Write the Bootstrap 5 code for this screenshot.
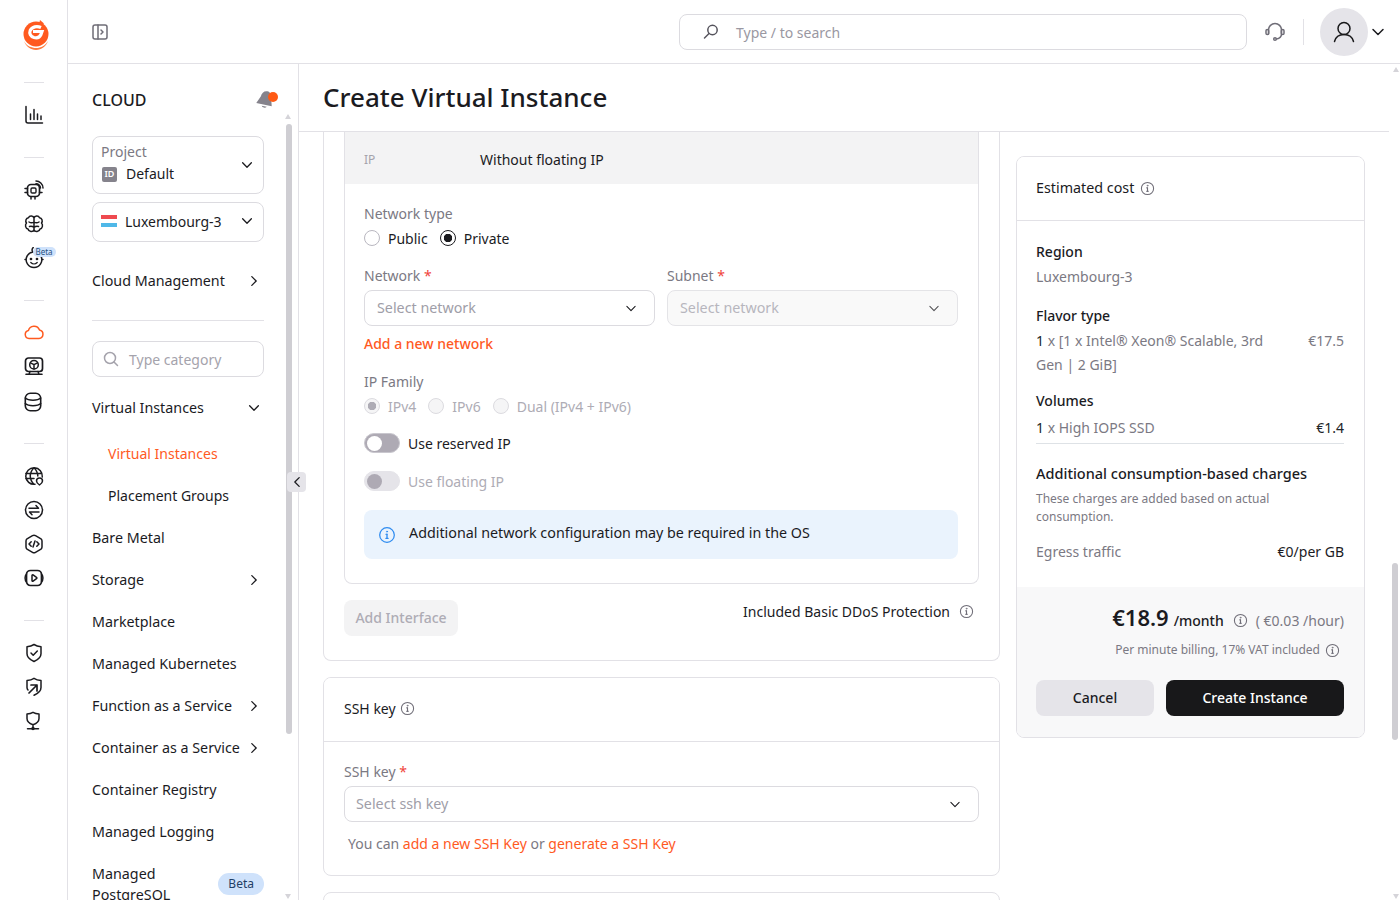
<!DOCTYPE html>
<html lang="en">
<head>
  <meta charset="UTF-8">
  <title>Create Virtual Instance</title>
  <link rel="stylesheet" href="https://cdn.jsdelivr.net/npm/bootstrap@5.3.0/dist/css/bootstrap.min.css">
  <style>
    html, body { height: 100%; }
    body { font-family: "Noto Sans", sans-serif; font-size: 14px; color: #1b1b1f; overflow: hidden; }
    svg { display: block; fill: none; stroke: currentColor; stroke-width: 1.5; stroke-linecap: round; stroke-linejoin: round; flex: none; }

    .rail { width: 68px; flex: none; border-right: 1px solid #e2e1e6; padding-top: 20px; }
    .rail-logo { height: 30px; margin: 0 0 32px 4px; }
    .rail-sep { width: 20px; height: 1px; background: #e2e1e6; }
    .rail-group { padding: 15px 0 25px; }
    .rail-slot { height: 34px; position: relative; color: #1b1b1f; }
    .rail-beta { position: absolute; left: 9px; top: 6px; font-size: 8px; line-height: 10px; padding: 0 3px; border-radius: 5px; background: #cfe2fb; color: #24507f; }

    .topbar { height: 64px; flex: none; border-bottom: 1px solid #e2e1e6; padding: 0 14px 0 24px; }
    .searchbox { width: 568px; height: 36px; border: 1px solid #dcdbe0; border-radius: 8px; margin-left: auto; padding: 1px 0 0 22px; color: #9a98a2; }
    .avatar { width: 48px; height: 48px; background: #e5e4e9; }
    .vline { width: 1px; height: 26px; background: #e2e1e6; margin: 0 16px 0 17px; }

    .side { width: 231px; flex: none; border-right: 1px solid #e2e1e6; padding: 0 34px 0 24px; position: relative; }
    .side-title { height: 72px; font-size: 16px; font-weight: 500; }
    .side-box { border: 1px solid #dcdbe0; border-radius: 8px; padding: 0 9px 0 8px; }
    .box-project { height: 58px; margin-bottom: 8px; padding-bottom: 4px; }
    .box-region { height: 40px; padding-bottom: 2px; }
    .box-search { height: 36px; color: #a5a3ac; padding-left: 10px; gap: 10px; }
    .id-tag { width: 15px; height: 15px; font-size: 9px; font-weight: 600; background: #85838c; color: #fff; border-radius: 2px; margin-left: 1px; }
    .flag { width: 16px; height: 12px; background: linear-gradient(#ef4a4f 33%, #fff 33% 66%, #4fb8e8 66%); }
    .side-hr { height: 1px; background: #e2e1e6; margin: 19px 0 20px; }
    .side-item { height: 42px; padding: 2px 3px 0 0; font-size: 14.3px; white-space: nowrap; }
    .side-sub { padding-left: 16px; font-size: 14px; }
    .side-active { color: #ff5a1f; }
    .beta-pill { background: #cfe2fb; color: #1f3f66; font-size: 12px; padding: 2px 10px; border-radius: 11px; line-height: 18px; }
    .collapse-tab { position: absolute; width: 19px; height: 20px; background: #e5e4e9; border-radius: 4px; }
    .thumb { position: absolute; width: 6px; background: #cfced3; border-radius: 3px; }
    .arrow-up, .arrow-down { position: absolute; width: 0; height: 0; border-left: 3.5px solid transparent; border-right: 3.5px solid transparent; }
    .arrow-up { border-bottom: 5px solid #d5d4d9; }
    .arrow-down { border-top: 5px solid #d5d4d9; }

    .page-main { position: relative; min-width: 0; }
    .page-title { height: 68px; margin-right: 11px; padding-left: 24px; border-bottom: 1px solid #e2e1e6; flex: none; }
    .page-title h1 { font-size: 26px; font-weight: 500; margin: 0; color: #1b1b1f; }
    .form-col { width: 677px; margin-left: 24px; flex: none; }
    .cost-col { width: 349px; margin: 24px 0 0 16px; flex: none; }

    .card { --bs-card-border-color: #e2e1e6; --bs-card-border-radius: 8px; --bs-card-inner-border-radius: 7px; --bs-card-cap-bg: #fff; }
    .card-top { border-top: 0; border-top-left-radius: 0; border-top-right-radius: 0; height: 529px; margin-bottom: 16px; padding: 0 20px; }
    .card-inner { border-top: 0; border-top-left-radius: 0; border-top-right-radius: 0; height: 452px; padding: 0 20px 0 19px; }
    .ip-row { height: 52px; margin: 0 -20px 0 -19px; padding: 3px 0 0 19px; background: #f3f3f4; }
    .ip-key { width: 116px; font-size: 12px; color: #a5a3ac; padding-top: 1px; }
    .lbl { color: #7b7983; line-height: 20px; }
    .req { color: #f0443c; }
    .form-select { height: 36px; font-size: 14.3px; color: #a09ea8; border-color: #dcdbe0; border-radius: 8px; padding: 0 36px 0 12px; background-size: 14px 11px; background-position: right 16px center;
      --bs-form-select-bg-img: url("data:image/svg+xml,%3csvg xmlns='http://www.w3.org/2000/svg' viewBox='0 0 16 16'%3e%3cpath fill='none' stroke='%231b1b1f' stroke-linecap='round' stroke-linejoin='round' stroke-width='1.6' d='m2 5 6 6 6-6'/%3e%3c/svg%3e"); }
    .form-select:disabled { background-color: #f7f7f8; opacity: .75; }
    .sel-ssh { padding-left: 11px; }
    .opts { height: 24px; margin-top: 2px; gap: 12px; }
    .form-check { margin: 0; padding: 0; min-height: 0; display: flex; align-items: center; gap: 8px; }
    .form-check .form-check-input { float: none; margin: 0; width: 16px; height: 16px; border-color: #b9b7c0; }
    .form-check .form-check-input:checked[type=radio] { background-color: #fff; border-color: #1b1b1f; background-image: radial-gradient(circle, #1b1b1f 0 4px, transparent 4.5px); }
    .form-check .form-check-input:disabled { opacity: 1; background-color: #f5f5f6; border-color: #dcdbe0; }
    .form-check .form-check-input:checked:disabled[type=radio] { background-color: #f5f5f6; border-color: #dcdbe0; background-image: radial-gradient(circle, #aeacb5 0 4px, transparent 4.5px); }
    .form-check-label { opacity: 1 !important; }
    .muted-opt { color: #aeacb5; }
    .add-link { color: #ff5a1f; text-decoration: none; }
    .add-link-b { font-weight: 500; }
    .toggle { width: 36px; height: 20px; border-radius: 10px; background: #aeaab4; padding: 2px; border: 1px solid #c9c7ce; }
    .toggle i { display: block; width: 15px; height: 15px; border-radius: 50%; background: #fff; }
    .toggle.off { background: #e5e4e9; border-color: #e5e4e9; }
    .toggle.off i { background: #aeaab4; }
    .note { height: 49px; border: 0; border-radius: 8px; margin: 0; padding: 0 0 0 14px; gap: 13px; color: #1b1b1f; --bs-alert-bg: #eaf3fd; font-size: 14.3px; }
    .note-text { padding-bottom: 3px; }
    .note-icon { color: #2e8bf0; }
    .btn-ghost, .btn-ghost:disabled { height: 36px; width: 114px; background: #f3f3f4; color: #aeacb5; border: 0; border-radius: 8px; font-size: 14px; font-weight: 500; padding: 0 0 2px; opacity: 1; }
    .info { color: #6f6d77; }
    .ssh-head { height: 64px; padding: 0 20px 2px; background: #fff; }
    .ssh-body { padding: 20px 20px 0; height: 133px; }

    .cost-head { height: 64px; padding: 0 20px 1px 19px; background: #fff; font-size: 14.3px; }
    .cost-body { height: 366px; padding: 0 20px 0 19px; }
    .cost-foot { background: #f8f8f9; border: 0; padding: 0 20px 0 19px; height: 150px; }
    .gray { color: #7b7983; }
    .h-sub { font-weight: 500; }
    .price { font-size: 22px; font-weight: 600; line-height: 30px; }
    .btn-cancel { width: 118px; height: 36px; background: #e5e4e9; border: 0; border-radius: 8px; font-size: 14px; font-weight: 500; color: #1b1b1f; padding: 0 0 2px; }
    .btn-create { width: 178px; height: 36px; background: #18181a; border: 0; border-radius: 8px; font-size: 14px; font-weight: 500; color: #fff; padding: 0 0 2px; }
    .small-note { font-size: 12px; line-height: 18px; }
  </style>
</head>
<body class="d-flex">

<svg width="0" height="0" class="position-absolute">
  <symbol id="chev-d" viewBox="0 0 16 16"><path d="m3 5.5 5 5 5-5"/></symbol>
  <symbol id="chev-r" viewBox="0 0 16 16"><path d="m5.5 3 5 5-5 5"/></symbol>
  <symbol id="chev-l" viewBox="0 0 16 16"><path d="m10.5 3-5 5 5 5"/></symbol>
  <symbol id="info" viewBox="0 0 16 16"><circle cx="8" cy="8" r="6.5" stroke-width="1.1"/><path d="M8 7.3v3.6" stroke-width="1.2"/><path d="M7 7.3h1M7 11h2" stroke-width="1"/><circle cx="8" cy="5" r=".5" stroke-width=".8"/></symbol>
</svg>

<aside class="rail d-flex flex-column align-items-center">
  <div class="rail-logo">
    <svg width="26" height="30" viewBox="0 0 26 30" style="stroke:none">
      <circle cx="13" cy="14" r="12.500" fill="#ff5a1f"/>
      <path d="M17 0 21 3.500 15.500 6z" fill="#ff5a1f"/>
      <path d="M18 7.500c-4-1.800-9-1-10.800 3-1.200 3 .3 6 3.800 7 3.200.8 5.800-.3 7-3l1-3h-9" fill="none" stroke="#fff" stroke-width="3.200" stroke-linecap="butt" stroke-linejoin="miter"/>
      <path d="M1 21c2.500 5 7.500 7 12 7 5 0 9.500-2.500 12-7-2 5.500-6.500 9-12 9S3 26.500 1 21z" fill="#ff7a3d"/>
    </svg>
  </div>
  <div class="rail-sep"></div>
  <div class="rail-group">
    <div class="rail-slot d-flex align-items-center"><svg width="20" height="20" viewBox="0 0 20 20"><path d="M2 1.500V16a2 2 0 0 0 2 2h14.500M6.500 9v5.500M10 4.500v10M13.500 9v5.500M17 11v3.500"/></svg></div>
  </div>
  <div class="rail-sep"></div>
  <div class="rail-group" style="padding-bottom:25px">
    <div class="rail-slot d-flex align-items-center"><svg width="20" height="20" viewBox="0 0 20 20"><rect x="3.500" y="4.500" width="12" height="12" rx="3.500" stroke-width="1.700"/><rect x="7" y="8" width="5" height="5" rx="1.200" stroke-width="1.400"/><path d="M1 8.500h2.500M1 12.500h2.500M15.500 12.500H18M7 17v2M11 17v2M12 1c3.500 0 7 3 7 7M12 3.700c2.500 0 4.500 2 4.500 4.300"/></svg></div>
    <div class="rail-slot d-flex align-items-center"><svg width="20" height="20" viewBox="0 0 20 20" stroke-width="1.600"><path d="M10 4v13M10 4C9.500 1.500 5.500 1 4.500 3.800 2 4 1 7 2.500 9 .7 11 1.500 14.500 4 15c.7 3 5 3.500 6 .8M10 4c.5-2.500 4.500-3 5.500-.2C18 4 19 7 17.500 9c1.800 2 1 5.500-1.500 6-.7 3-5 3.500-6 .8M5 8c1.500 1 3.500 1 5 0M15 8c-1.500 1-3.500 1-5 0M5.500 12.500c1.500-.5 3-.3 4.500 1M14.500 12.500c-1.500-.5-3-.3-4.500 1"/></svg></div>
    <div class="rail-slot d-flex align-items-center">
      <svg width="20" height="22" viewBox="0 0 20 22"><path d="M9 5a7.800 7.800 0 1 0 2 0M9.500 5c-1.800-.7-2-2.500-.3-4.500M1.800 12.500H1M18.200 12.500h.8"/><path d="M6.800 15.500c1.800 1.800 4.600 1.800 6.400 0" stroke-width="1.300"/><circle cx="7" cy="12" r=".6"/><circle cx="13" cy="12" r=".6"/></svg>
      <span class="rail-beta">Beta</span>
    </div>
  </div>
  <div class="rail-sep"></div>
  <div class="rail-group" style="padding:14px 0 26px">
    <div class="rail-slot d-flex align-items-center" style="color:#ff5a1f"><svg width="20" height="16" viewBox="0 0 20 16"><path d="M5 14.500a4 4 0 0 1-.6-7.900A5.800 5.800 0 0 1 15.500 6a4.300 4.300 0 0 1-.5 8.500z"/></svg></div>
    <div class="rail-slot d-flex align-items-center"><svg width="20" height="18" viewBox="0 0 20 18"><rect x="1.500" y="1" width="17" height="13.500" rx="3" stroke-width="1.700"/><circle cx="10" cy="7.700" r="4.300"/><path d="m10 7.700-3.500-1.800M10 7.700l3.500-1.800M10 7.700v4.200M2 17.300h16M5 17.300l1-2.800M15 17.300l-1-2.800"/></svg></div>
    <div class="rail-slot d-flex align-items-center pt-1"><svg width="18" height="20" viewBox="0 0 18 20"><rect x="1.300" y="1.300" width="15.400" height="17.400" rx="5" stroke-width="1.600"/><path d="M1.300 6c1.500 1.500 4 2.200 7.700 2.200S15.200 7.500 16.700 6M1.300 11.500c1.500 1.500 4 2.200 7.700 2.200s6.200-.7 7.700-2.200"/></svg></div>
  </div>
  <div class="rail-sep"></div>
  <div class="rail-group" style="padding-top:15px">
    <div class="rail-slot d-flex align-items-center"><svg width="20" height="20" viewBox="0 0 20 20"><path d="M11 18.300a8.300 8.300 0 1 1 7.300-7.300M1.800 7.500h16M1.800 12.500H10M10 1.700c-5 5-5 11.500 0 16.600M10 1.700c2.500 2.500 3.800 5.500 3.800 8.300"/><path d="M15.500 12a3 3 0 0 1 3 3c0 2-3 4-3 4s-3-2-3-4a3 3 0 0 1 3-3z" fill="#fff"/></svg></div>
    <div class="rail-slot d-flex align-items-center"><svg width="20" height="20" viewBox="0 0 20 20"><circle cx="10" cy="10" r="8.500"/><path d="M5 8.200h9.500L12 5.500M15 12H5.500L8 14.700"/></svg></div>
    <div class="rail-slot d-flex align-items-center"><svg width="20" height="20" viewBox="0 0 20 20"><path d="M8.500 1.700a3 3 0 0 1 3 0l5.500 3.200a2.500 2.500 0 0 1 1 2v6.200a2.500 2.500 0 0 1-1 2l-5.500 3.200a3 3 0 0 1-3 0L3 15.100a2.500 2.500 0 0 1-1-2V6.900a2.500 2.500 0 0 1 1-2z"/><path d="M7.200 7.700 5 10l2.200 2.300M12.800 7.700 15 10l-2.200 2.300M11 7l-2 6"/></svg></div>
    <div class="rail-slot d-flex align-items-center"><svg width="20" height="18" viewBox="0 0 20 18"><rect x="2.500" y="1.500" width="15" height="15" rx="4" stroke-width="1.700"/><path d="M2.500 5C.6 7 .6 11 2.500 13M17.500 5c1.900 2 1.900 6 0 8"/><path d="M8 6.500c0-.6.600-.9 1.100-.6l3.400 2.500c.5.300.5 1 0 1.300l-3.400 2.500c-.5.300-1.100 0-1.100-.6z"/></svg></div>
  </div>
  <div class="rail-sep"></div>
  <div class="rail-group">
    <div class="rail-slot d-flex align-items-center"><svg width="18" height="20" viewBox="0 0 18 20"><path d="M9 1.500c2 1.300 4.500 2 7 2.200v7c0 3.500-3 6-7 7.800-4-1.800-7-4.300-7-7.800v-7c2.500-.2 5-.9 7-2.200z"/><path d="m6 10 2.200 2.200L12.300 8"/></svg></div>
    <div class="rail-slot d-flex align-items-center"><svg width="18" height="20" viewBox="0 0 18 20"><path d="M3 13C2 12 2 11 2 10.500v-7c2.500-.2 5-.9 7-2.200 2 1.300 4.500 2 7 2.200v7c0 3.500-3 6-7 7.800"/><path d="m4 16 8-8M6 8h6v6" stroke-width="1.700"/></svg></div>
    <div class="rail-slot d-flex align-items-center"><svg width="16" height="20" viewBox="0 0 16 20"><path d="M8 1.300c1.800 1 3.600 1.500 6 1.700v4.500c0 2.800-2.600 5-6 6.300-3.400-1.300-6-3.500-6-6.300V3c2.400-.2 4.200-.7 6-1.700zM8 14v3.500M2.500 17.700h11"/><circle cx="8" cy="17.500" r="1"/></svg></div>
  </div>
</aside>

<div class="flex-grow-1 d-flex flex-column" style="min-width:0">
  <header class="topbar d-flex align-items-center">
    <svg width="16" height="16" viewBox="0 0 16 16" style="color:#6f6d77" stroke-width="1.100"><rect x="1" y="1" width="14" height="14" rx="2"/><path d="M6 1v14M9 6l2 2-2 2"/></svg>
    <div class="searchbox d-flex align-items-center gap-3">
      <svg width="18" height="18" viewBox="0 0 18 18" style="color:#55535c" stroke-width="1.200"><circle cx="10.500" cy="7" r="4.700"/><path d="M7 10.500 2.500 15"/></svg>
      <span>Type / to search</span>
    </div>
    <svg style="margin-left:17px;color:#6f6d77" width="22" height="22" viewBox="0 0 22 22" stroke-width="1.500"><path d="M4.500 13V9a6.500 6.500 0 0 1 13 0v4M17.500 13c0 3-2 4.500-5 5"/><rect x="2" y="8.500" width="2.700" height="5" rx="1.300"/><rect x="17.300" y="8.500" width="2.700" height="5" rx="1.300"/><circle cx="11" cy="18" r="1.300"/></svg>
    <div class="vline"></div>
    <div class="avatar rounded-circle d-flex align-items-center justify-content-center">
      <svg width="24" height="24" viewBox="0 0 24 24" style="color:#18181a" stroke-width="1.800"><circle cx="12" cy="8.500" r="6"/><path d="M2.500 21.500c1-4 4-7 9.500-7s8.500 3 9.500 7"/></svg>
    </div>
    <svg style="margin-left:2px" width="16" height="16"><use href="#chev-d"/></svg>
  </header>

  <div class="d-flex flex-grow-1" style="min-height:0">
    <nav class="side overflow-hidden">
      <div class="side-title d-flex align-items-center justify-content-between" style="margin-right:-14px">
        <span>CLOUD</span>
        <span class="position-relative d-block" style="width:22px;height:20px">
          <svg width="19" height="20" viewBox="0 0 18 19" style="stroke:none;transform:rotate(12deg)"><path d="M9 1c3 0 5 2.500 5 6l2 7H1l3-7c0-3.500 2-6 5-6z" fill="#85838c"/><path d="M6.500 15.500a3 3 0 0 0 5 0z" fill="#85838c"/></svg>
          <span class="position-absolute rounded-circle" style="width:10px;height:10px;right:0;top:2px;background:#ff5a14"></span>
        </span>
      </div>
      <div class="side-box box-project d-flex align-items-center justify-content-between">
        <div>
          <div class="gray" style="line-height:22px">Project</div>
          <div class="d-flex align-items-center" style="line-height:22px;gap:9px"><span class="id-tag d-flex align-items-center justify-content-center">ID</span>Default</div>
        </div>
        <svg style="margin-top:4px" width="14" height="14"><use href="#chev-d"/></svg>
      </div>
      <div class="side-box box-region d-flex align-items-center justify-content-between">
        <span class="d-flex align-items-center gap-2"><span class="flag"></span>Luxembourg-3</span>
        <svg width="14" height="14"><use href="#chev-d"/></svg>
      </div>
      <div class="side-item d-flex align-items-center justify-content-between" style="margin-top:17px">
        <span>Cloud Management</span><svg width="14" height="14"><use href="#chev-r"/></svg>
      </div>
      <div class="side-hr"></div>
      <div class="side-box box-search d-flex align-items-center">
        <svg width="16" height="16" viewBox="0 0 16 16" stroke-width="1.200"><circle cx="7" cy="7" r="5.500"/><path d="m11 11 3.500 3.500"/></svg>
        <span>Type category</span>
      </div>
      <div class="side-item d-flex align-items-center justify-content-between" style="margin-top:9px">
        <span>Virtual Instances</span><svg width="14" height="14"><use href="#chev-d"/></svg>
      </div>
      <div class="side-item side-sub side-active d-flex align-items-center" style="margin-top:3px">Virtual Instances</div>
      <div class="side-item side-sub d-flex align-items-center">Placement Groups</div>
      <div class="side-item d-flex align-items-center" style="margin-top:1px">Bare Metal</div>
      <div class="side-item d-flex align-items-center justify-content-between"><span>Storage</span><svg width="14" height="14"><use href="#chev-r"/></svg></div>
      <div class="side-item d-flex align-items-center">Marketplace</div>
      <div class="side-item d-flex align-items-center">Managed Kubernetes</div>
      <div class="side-item d-flex align-items-center justify-content-between"><span>Function as a Service</span><svg width="14" height="14"><use href="#chev-r"/></svg></div>
      <div class="side-item d-flex align-items-center justify-content-between"><span>Container as a Service</span><svg width="14" height="14"><use href="#chev-r"/></svg></div>
      <div class="side-item d-flex align-items-center">Container Registry</div>
      <div class="side-item d-flex align-items-center">Managed Logging</div>
      <div class="d-flex align-items-center justify-content-between" style="line-height:21px;padding-top:11px;font-size:14.3px">
        <span>Managed<br>PostgreSQL</span><span class="beta-pill">Beta</span>
      </div>
      <span class="arrow-up" style="left:217px;top:50px"></span>
      <span class="thumb" style="left:218px;top:60px;height:610px"></span>
      <span class="arrow-down" style="left:217px;top:830px"></span>
    </nav>

    <main class="page-main flex-grow-1 d-flex flex-column overflow-hidden">
      <div class="page-title d-flex align-items-center"><h1>Create Virtual Instance</h1></div>
      <div class="d-flex flex-grow-1" style="min-height:0">
        <div class="form-col">
          <div class="card card-top">
            <div class="card card-inner">
              <div class="ip-row d-flex align-items-center"><span class="ip-key">IP</span><span>Without floating IP</span></div>
              <div class="lbl" style="margin-top:20px">Network type</div>
              <div class="opts d-flex align-items-center">
                <div class="form-check"><input class="form-check-input" type="radio" name="nt" id="nt1"><label class="form-check-label" for="nt1">Public</label></div>
                <div class="form-check"><input class="form-check-input" type="radio" name="nt" id="nt2" checked><label class="form-check-label" for="nt2">Private</label></div>
              </div>
              <div class="row g-0" style="margin-top:16px">
                <div class="col" style="margin-right:12px">
                  <label class="lbl d-block" style="margin-bottom:4px">Network <span class="req">*</span></label>
                  <select class="form-select"><option>Select network</option></select>
                </div>
                <div class="col">
                  <label class="lbl d-block" style="margin-bottom:4px">Subnet <span class="req">*</span></label>
                  <select class="form-select" disabled><option>Select network</option></select>
                </div>
              </div>
              <div style="margin-top:7px;line-height:22px"><a class="add-link add-link-b" href="#">Add a new network</a></div>
              <div class="lbl" style="margin-top:17px">IP Family</div>
              <div class="opts d-flex align-items-center">
                <div class="form-check muted-opt"><input class="form-check-input" type="radio" name="ipf" checked disabled><label class="form-check-label">IPv4</label></div>
                <div class="form-check muted-opt"><input class="form-check-input" type="radio" name="ipf" disabled><label class="form-check-label">IPv6</label></div>
                <div class="form-check muted-opt"><input class="form-check-input" type="radio" name="ipf" disabled><label class="form-check-label">Dual (IPv4 + IPv6)</label></div>
              </div>
              <div class="d-flex align-items-center gap-2" style="margin-top:15px;height:20px"><span class="toggle"><i></i></span><span>Use reserved IP</span></div>
              <div class="d-flex align-items-center gap-2 muted-opt" style="margin-top:18px;height:20px"><span class="toggle off"><i></i></span><span>Use floating IP</span></div>
              <div class="alert note d-flex align-items-center" style="margin-top:19px">
                <svg class="note-icon" width="18" height="18"><use href="#info"/></svg>
                <span class="note-text">Additional network configuration may be required in the OS</span>
              </div>
            </div>
            <div class="d-flex align-items-start justify-content-between" style="margin-top:16px">
              <button class="btn btn-ghost" type="button" disabled>Add Interface</button>
              <span class="d-flex align-items-center" style="gap:9px;padding-right:5px;margin-top:1px">Included Basic DDoS Protection <svg class="info" width="15" height="15"><use href="#info"/></svg></span>
            </div>
          </div>

          <div class="card mb-3">
            <div class="card-header ssh-head d-flex align-items-center gap-1">SSH key <svg class="info" width="15" height="15"><use href="#info"/></svg></div>
            <div class="ssh-body">
              <label class="lbl d-block" style="margin-bottom:4px">SSH key <span class="req">*</span></label>
              <select class="form-select sel-ssh"><option>Select ssh key</option></select>
              <p class="mb-0 gray" style="margin-top:11px;padding-left:4px;line-height:22px">You can <a class="add-link" href="#">add a new SSH Key</a> or <a class="add-link" href="#">generate a SSH Key</a></p>
            </div>
          </div>
          <div class="card" style="height:60px"></div>
        </div>

        <div class="cost-col">
          <div class="card">
            <div class="card-header cost-head d-flex align-items-center gap-1"><span>Estimated cost</span> <svg class="info" style="margin-left:2px" width="15" height="15"><use href="#info"/></svg></div>
            <div class="cost-body">
              <div class="h-sub" style="margin-top:20px;line-height:22px">Region</div>
              <div class="gray" style="margin-top:3px;line-height:22px">Luxembourg-3</div>
              <div class="h-sub" style="margin-top:17px;line-height:22px">Flavor type</div>
              <div class="d-flex justify-content-between gray" style="margin-top:2px;line-height:24px">
                <span style="width:240px"><span class="text-dark">1</span> x [1 x Intel® Xeon® Scalable, 3rd Gen | 2 GiB]</span><span>€17.5</span>
              </div>
              <div class="h-sub" style="margin-top:13px;line-height:22px">Volumes</div>
              <div class="d-flex justify-content-between gray border-bottom" style="margin-top:5px;line-height:22px;padding-bottom:4px">
                <span><span class="text-dark">1</span> x High IOPS SSD</span><span class="text-dark">€1.4</span>
              </div>
              <div class="h-sub" style="margin-top:18px;line-height:22px;font-size:14.500px">Additional consumption-based charges</div>
              <div class="small-note gray" style="margin-top:6px">These charges are added based on actual<br>consumption.</div>
              <div class="d-flex justify-content-between" style="margin-top:15px;line-height:22px"><span class="gray">Egress traffic</span><span>€0/per GB</span></div>
            </div>
            <div class="card-footer cost-foot">
              <div class="d-flex align-items-center justify-content-end" style="margin-top:15px;height:30px">
                <span class="price">€18.9</span>
                <span class="h-sub" style="padding-top:7px;margin-left:5px">/month</span>
                <svg class="info" style="margin:6px 0 0 9px" width="15" height="15"><use href="#info"/></svg>
                <span class="gray ms-2" style="padding-top:7px">( €0.03 /hour)</span>
              </div>
              <div class="d-flex align-items-center justify-content-end gray small-note" style="margin-top:9px;gap:5px">Per minute billing, 17% VAT included <svg class="info me-1" width="15" height="15"><use href="#info"/></svg></div>
              <div class="d-flex justify-content-between" style="margin-top:21px">
                <button class="btn btn-cancel" type="button">Cancel</button>
                <button class="btn btn-create" type="button">Create Instance</button>
              </div>
            </div>
          </div>
        </div>
      </div>
      <span class="arrow-up" style="right:1px;top:3px"></span>
      <span class="thumb" style="right:2px;top:499px;height:177px"></span>
      <span class="arrow-down" style="right:1px;top:830px"></span>
    </main>
  </div>
</div>

<span class="collapse-tab d-flex align-items-center justify-content-center" style="left:287px;top:472px"><svg width="14" height="14"><use href="#chev-l"/></svg></span>
</body>
</html>
